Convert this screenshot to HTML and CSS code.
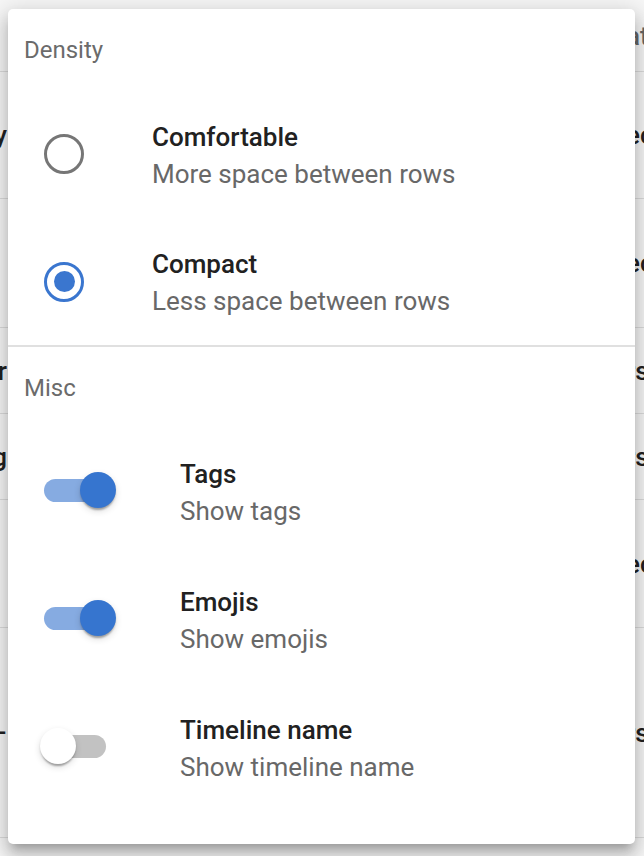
FILE: index.html
```html
<!DOCTYPE html>
<html lang="en">
<head>
<meta charset="utf-8">
<title>Settings menu</title>
<link rel="stylesheet" href="styles.css">
</head>
<body>
<div class="table">
  <div class="trow r1"><span class="lc"></span><span class="rc head">ate</span></div>
  <div class="trow r2"><span class="lc">Daily</span><span class="rc">ec</span></div>
  <div class="trow r3"><span class="lc"></span><span class="rc">ec</span></div>
  <div class="trow r4"><span class="lc">Timer</span><span class="rc">rs</span></div>
  <div class="trow r5"><span class="lc">Log</span><span class="rc">rs</span></div>
  <div class="trow r6"><span class="lc"></span><span class="rc">ec</span></div>
  <div class="trow r7"><span class="lc">–</span><span class="rc">rs</span></div>
</div>

<div class="menu" role="menu">
  <div class="subheader sh1">Density</div>
  <div class="item radio-item ri1">
    <span class="radio"></span>
    <div class="texts">
      <div class="primary">Comfortable</div>
      <div class="secondary">More space between rows</div>
    </div>
  </div>
  <div class="item radio-item ri2">
    <span class="radio checked"></span>
    <div class="texts">
      <div class="primary">Compact</div>
      <div class="secondary">Less space between rows</div>
    </div>
  </div>
  <div class="divider"></div>
  <div class="subheader sh2">Misc</div>
  <div class="item switch-item">
    <span class="switch on"><span class="track"></span><span class="thumb"></span></span>
    <div class="texts">
      <div class="primary">Tags</div>
      <div class="secondary">Show tags</div>
    </div>
  </div>
  <div class="item switch-item">
    <span class="switch on"><span class="track"></span><span class="thumb"></span></span>
    <div class="texts">
      <div class="primary">Emojis</div>
      <div class="secondary">Show emojis</div>
    </div>
  </div>
  <div class="item switch-item">
    <span class="switch"><span class="track"></span><span class="thumb"></span></span>
    <div class="texts">
      <div class="primary">Timeline name</div>
      <div class="secondary">Show timeline name</div>
    </div>
  </div>
</div>
</body>
</html>
```

FILE: styles.css
```css
html, body {
  margin: 0;
  padding: 0;
}
body {
  width: 644px;
  height: 856px;
  overflow: hidden;
  background: #f7f7f7;
  font-family: Roboto, "Liberation Sans", Arial, sans-serif;
  position: relative;
}

/* background table */
.table {
  display: flex;
  flex-direction: column;
}
.trow {
  display: flex;
  justify-content: space-between;
  align-items: center;
  border-bottom: 1px solid #dcdcdc;
  box-sizing: border-box;
  font-size: 26px;
  color: #212121;
  font-weight: 500;
}
.r1 { height: 72px; }
.r2 { height: 127px; }
.r3 { height: 129px; }
.r4 { height: 86px; }
.r5 { height: 86px; }
.r6 { height: 128px; }
.r7 { height: 210px; }
.lc {
  width: 7px;
  overflow: hidden;
  white-space: nowrap;
  direction: rtl;
  text-align: right;
}
.rc {
  width: 12px;
  overflow: hidden;
  white-space: nowrap;
  text-indent: -6px;
}
.rc.head {
  color: #666;
}

/* menu card */
.menu {
  position: absolute;
  left: 8px;
  top: 9px;
  width: 627px;
  height: 835px;
  box-sizing: border-box;
  background: #fff;
  border-radius: 5px;
  box-shadow:
    0 8px 8px -5px rgba(0,0,0,0.2),
    0 12px 16px 2px rgba(0,0,0,0.14),
    0 4px 22px 5px rgba(0,0,0,0.13);
  display: flex;
  flex-direction: column;
}
.subheader {
  display: flex;
  align-items: center;
  padding-left: 16px;
  font-size: 24px;
  color: #6b6b6b;
}
.sh1 { height: 81px; padding-top: 1px; box-sizing: border-box; }
.sh2 { height: 79px; padding-top: 3px; box-sizing: border-box; }

.item {
  display: flex;
  align-items: center;
  box-sizing: border-box;
}
.radio-item {
  padding-left: 36px;
  gap: 68px;
}
.ri1 { height: 128px; }
.ri2 { height: 127px; }
.radio-item .texts {
  padding-top: 3px;
}
.switch-item {
  height: 128px;
  padding-left: 32px;
  gap: 64px;
}
.switch-item .texts {
  padding-top: 6px;
}

.texts {
  display: flex;
  flex-direction: column;
}
.primary {
  font-size: 26px;
  line-height: 37px;
  font-weight: 500;
  color: #212121;
}
.secondary {
  font-size: 26px;
  line-height: 37px;
  color: #686868;
}

.divider {
  height: 2px;
  background: #e0e0e0;
}

/* radio */
.radio {
  width: 40px;
  height: 40px;
  box-sizing: border-box;
  border: 3.5px solid #767676;
  border-radius: 50%;
  display: flex;
  align-items: center;
  justify-content: center;
  flex: none;
}
.radio.checked {
  border-color: #3a76cf;
}
.radio.checked::after {
  content: "";
  width: 21px;
  height: 21px;
  border-radius: 50%;
  background: #3a76cf;
}

/* switch */
.switch {
  position: relative;
  width: 76px;
  height: 36px;
  flex: none;
}
.track {
  position: absolute;
  left: 4px;
  top: 6.5px;
  width: 62px;
  height: 23px;
  border-radius: 12px;
  background: #c2c2c2;
}
.switch.on .track {
  background: #86abe1;
}
.thumb {
  position: absolute;
  left: 0;
  top: 0;
  width: 36px;
  height: 36px;
  border-radius: 50%;
  background: #fff;
  box-shadow:
    0 4px 2px -2px rgba(0,0,0,0.2),
    0 2px 2px 0 rgba(0,0,0,0.14),
    0 3px 7px 0 rgba(0,0,0,0.14);
}
.switch.on .thumb {
  left: 40px;
  background: #3675cf;
}
```
